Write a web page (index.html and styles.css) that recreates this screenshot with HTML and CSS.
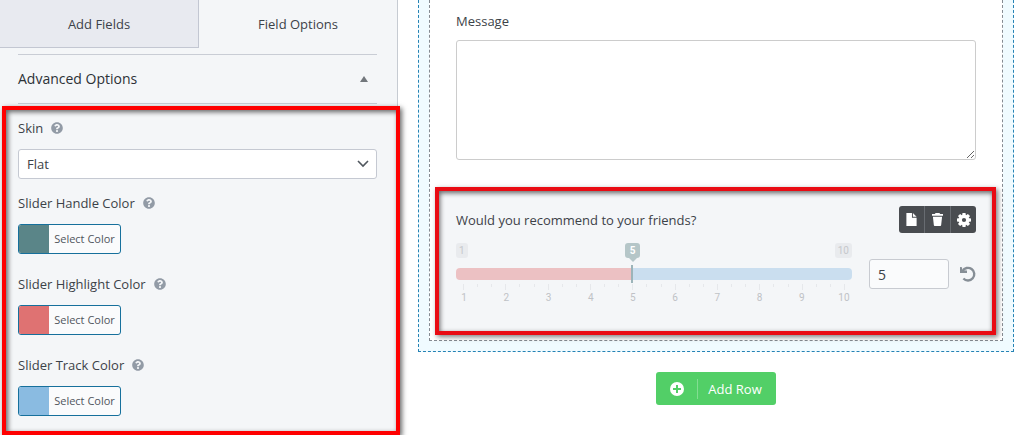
FILE: index.html
```
<!DOCTYPE html>
<html lang="en">
<head>
<meta charset="utf-8">
<title>Form Builder</title>
<link rel="stylesheet" href="styles.css">
</head>
<body>
<svg class="defs" aria-hidden="true">
  <symbol id="help" viewBox="0 0 512 512"><path fill="currentColor" d="M504 256c0 137-111 248-248 248S8 393 8 256 119 8 256 8s248 111 248 248zM262.700 90c-54.500 0-89.300 23-116.500 63.800-3.500 5.300-2.400 12.400 2.700 16.300l34.700 26.300c5.200 3.900 12.600 3 16.700-2.100 17.900-22.700 30.100-35.800 57.300-35.800 20.400 0 45.700 13.100 45.700 33 0 15-12.400 22.700-32.500 34C247.100 238.500 216 254.900 216 296v4c0 6.600 5.400 12 12 12h56c6.600 0 12-5.400 12-12v-1.300c0-28.500 83.200-29.600 83.200-106.700 0-58-60.200-102-116.500-102zM256 338c-25.400 0-46 20.600-46 46s20.600 46 46 46 46-20.600 46-46-20.600-46-46-46z"/></symbol>
</svg>
<aside class="sidebar">
  <nav class="tabs">
    <button class="tab" type="button">Add Fields</button>
    <button class="tab tab-active" type="button">Field Options</button>
  </nav>
  <button class="section-head" type="button" aria-expanded="true">Advanced Options
    <svg width="8" height="6" viewBox="0 0 8 6"><path fill="#72777c" d="M4 0l4 6H0z"/></svg>
  </button>
  <section class="options">
    <div class="option">
      <label class="option-label" for="skin">Skin <svg class="help"><use href="#help"/></svg></label>
      <div class="select-wrap">
        <select id="skin" class="select"><option>Flat</option></select>
        <svg class="chevron" width="12" height="8" viewBox="0 0 12 8"><path fill="none" stroke="#50575e" stroke-width="1.600" d="M1 1l5 5 5-5"/></svg>
      </div>
    </div>
    <div class="option">
      <label class="option-label" for="handle">Slider Handle Color <svg class="help"><use href="#help"/></svg></label>
      <button id="handle" class="color" type="button"><span class="swatch swatch-handle"></span><span class="color-text">Select Color</span></button>
    </div>
    <div class="option option-color">
      <label class="option-label" for="highlight">Slider Highlight Color <svg class="help"><use href="#help"/></svg></label>
      <button id="highlight" class="color" type="button"><span class="swatch swatch-highlight"></span><span class="color-text">Select Color</span></button>
    </div>
    <div class="option option-color">
      <label class="option-label" for="track">Slider Track Color <svg class="help"><use href="#help"/></svg></label>
      <button id="track" class="color" type="button"><span class="swatch swatch-track"></span><span class="color-text">Select Color</span></button>
    </div>
    <div class="marker marker-options"></div>
  </section>
</aside>
<main class="builder">
  <div class="row">
    <div class="column">
      <div class="field">
        <label class="field-label" for="message">Message</label>
        <textarea id="message" class="message"></textarea>
      </div>
      <div class="field field-active">
        <div class="field-head">
          <label class="field-label" for="rating">Would you recommend to your friends?</label>
          <div class="tools">
            <button class="tool" type="button" aria-label="Duplicate"><svg width="11" height="13" viewBox="0 0 11 14"><path fill="#fff" d="M0 0h6v5h5v9H0zM7 0l4 4H7z"/></svg></button>
            <button class="tool" type="button" aria-label="Delete"><svg width="11" height="13" viewBox="0 0 12 14"><path fill="#fff" d="M4 0h4l1 1h3v2H0V1h3zM1 4h10l-1 9q0 1-1 1H3q-1 0-1-1z"/></svg></button>
            <button class="tool" type="button" aria-label="Settings"><svg width="14" height="14" viewBox="0 0 14 14"><g fill="#fff"><path id="cog" d="M5.500 0h3l.5 3H5zM5 11h4l-.5 3h-3z"/><use href="#cog" transform="rotate(45 7 7)"/><use href="#cog" transform="rotate(90 7 7)"/><use href="#cog" transform="rotate(135 7 7)"/></g><circle cx="7" cy="7" r="3.600" fill="none" stroke="#fff" stroke-width="3"/></svg></button>
          </div>
        </div>
        <div class="rating">
          <div class="slider">
            <div class="bubbles"><span class="limit">1</span><output class="bubble" for="rating">5</output><span class="limit">10</span></div>
            <input id="rating" class="range" type="range" min="1" max="10" value="5">
            <div class="ticks"><i></i><i></i><i></i><i></i><i></i><i></i><i></i><i></i><i></i><i></i><i></i><i></i><i></i><i></i><i></i><i></i><i></i><i></i><i></i><i></i><i></i><i></i><i></i><i></i><i></i><i></i><i></i><i></i></div>
            <div class="numbers"><span>1</span><span>2</span><span>3</span><span>4</span><span>5</span><span>6</span><span>7</span><span>8</span><span>9</span><span>10</span></div>
          </div>
          <input class="value" type="text" value="5" aria-label="Rating value">
          <button class="reset" type="button" aria-label="Reset"><svg width="16" height="16" viewBox="0 0 16 16"><path fill="none" stroke="#868e96" stroke-width="2.400" d="M2.500 5A6.300 6.300 0 1 1 3.400 12.500"/><path fill="#868e96" d="M0 1l2 .2.3 3 4.700.3V7H0z"/></svg></button>
        </div>
        <div class="marker marker-field"></div>
      </div>
    </div>
  </div>
  <button class="add-row" type="button"><svg width="14" height="14" viewBox="0 0 14 14"><circle cx="7" cy="7" r="7" fill="#fff"/><path stroke="#52cf67" stroke-width="2" d="M7 3v8M3 7h8"/></svg><span class="add-text">Add Row</span></button>
</main>
</body>
</html>
```
FILE: styles.css
```
* { box-sizing: border-box; }
body {
  margin: 0;
  min-height: 100vh;
  display: flex;
  background: #fff;
  color: #3c4248;
  font: 500 13px/20px "Open Sans", "Noto Sans", sans-serif;
}
button, input, select, textarea { font: inherit; color: inherit; margin: 0; padding: 0; }
button { border: 0; background: none; }
svg { display: block; flex: none; }
.defs { position: absolute; width: 0; height: 0; }

.sidebar { flex: 0 0 39%; min-width: 398px; max-width: 398px; background: #f4f6f8; border-right: 1px solid #c6cbd2; }
.tabs { display: flex; height: 48px; }
.tab { flex: 1; }
.tab:first-child { background: #e8eaf0; border: solid #c3c7d2; border-width: 0 1px 1px 0; }
.section-head {
  display: flex; align-items: center; justify-content: space-between;
  width: calc(100% - 38px); height: 50px; margin: 6px 20px 0 18px; padding-right: 9px;
  border: solid #c9cdd5; border-width: 1px 0;
  font-size: 14px; color: #2c3136;
}
.options { position: relative; padding: 14px 20px 19px 18px; }
.option { margin-bottom: 14px; }
.option-color { margin-top: 20px; }
.option:nth-child(4) { margin-bottom: 0; }
.option-label { display: flex; align-items: center; gap: 8px; margin-bottom: 11px; }
.help { width: 12px; height: 12px; color: #929ba6; }
.select-wrap { display: flex; align-items: center; }
.select {
  appearance: none; width: 100%; height: 30px; padding: 0 8px;
  border: 1px solid #c5c9d2; border-radius: 3px; background: #fff; font-weight: 400;
}
.chevron { margin-left: -20px; margin-right: 8px; pointer-events: none; }
.color {
  display: flex; width: 103px; height: 30px; overflow: hidden;
  border: 1px solid #16709c; border-radius: 3px; background: #fafbfc;
  font-size: 11px; font-weight: 400; line-height: 28px; color: #50565c;
}
.swatch { width: 30px; height: 28px; }
.swatch-handle { background: #5a8588; }
.swatch-highlight { background: #df7272; }
.swatch-track { background: #8abbe1; }
.color-text { flex: 1; }

.marker { position: absolute; pointer-events: none; }
.marker-options {
  inset: 2px -3px 0 2px; border: 4px solid #fe0000;
  box-shadow: 2px 2px 5px rgba(0,0,0,.6), inset 2px 2px 5px rgba(0,0,0,.6);
}
.marker-field {
  inset: -1px 0 -1px -1px; border: 4px solid #e90b13;
  box-shadow: 2px 2px 5px rgba(0,0,0,.5), inset 1px 2px 5px rgba(0,0,0,.6);
}

.builder { flex: 1; display: flex; flex-direction: column; padding: 0 10px 0 20px; }
.row { border: 1px dashed #2683b5; border-top: 0; background: #f0fbff; padding: 0 10px 10px; }
.column { border: 1px dashed #858b92; border-top: 0; background: #fff; padding: 0 6px 6px; }
.field { position: relative; padding: 11px 20px 28px; }
.field-label { display: block; }
.message { display: block; width: 100%; height: 120px; margin-top: 9px; border: 1px solid #ccc; border-radius: 3px; background: #fff; }
.field-active { padding: 18px 20px 29px; background: #f4f6f8; }
.field-head { display: flex; align-items: center; justify-content: space-between; }
.tools { display: flex; height: 27px; border-radius: 3px; background: #494c50; }
.tool { display: grid; place-items: center; width: 26px; }
.tool + .tool { border-left: 1px solid #686c71; }
.tool:first-child { width: 25px; }
.rating { display: flex; align-items: center; margin-top: 10px; }
.slider { flex: 1; min-width: 0; font: 10px/15px Roboto, sans-serif; }
.bubbles { display: flex; justify-content: space-between; position: relative; height: 22px; color: #c6c8cc; }
.limit { height: 15px; padding: 0 3px; border-radius: 3px; background: #e9ebee; }
.bubble {
  position: absolute; left: calc(44.500% - 7px); width: 15px; height: 15px;
  border-radius: 3px; background: #b5c6c8; color: #fff; font-weight: 700; text-align: center;
}
.bubble::after { content: ""; position: absolute; left: 4px; top: 15px; border: 4px solid transparent; border-width: 4px 4px 0; border-top-color: #b5c6c8; }
.range { appearance: none; display: block; width: 100%; height: 18px; background: none; }
.range::-webkit-slider-runnable-track { height: 12px; border-radius: 4px; background: linear-gradient(90deg, #ecc1c3 44.500%, #cadeef 44.500%); }
.range::-webkit-slider-thumb { appearance: none; width: 2px; height: 18px; margin-top: -3px; background: #9cb4b9; }
.ticks { display: flex; justify-content: space-between; height: 7px; padding: 1px 7px 0; }
.ticks i { width: 1px; height: 3px; background: #e6e8eb; }
.ticks i:nth-child(3n+1) { height: 6px; }
.numbers { display: grid; grid-template-columns: repeat(10, 1fr); margin: 0 -13px; text-align: center; color: #bfc2c6; }
.value { width: 80px; height: 30px; margin-left: 17px; padding: 0 8px; border: 1px solid #c8cbd1; border-radius: 3px; background: #fafbfc; font-size: 14px; font-weight: 400; }
.reset { margin-left: 11px; }
.add-row {
  display: flex; align-items: center; justify-content: center; align-self: center;
  width: 120px; height: 33px; margin-top: 20px; border-radius: 3px; background: #52cf67; color: #fff;
}
.add-text { margin-left: 13px; padding-left: 10px; border-left: 1px solid #83dd92; }
```
